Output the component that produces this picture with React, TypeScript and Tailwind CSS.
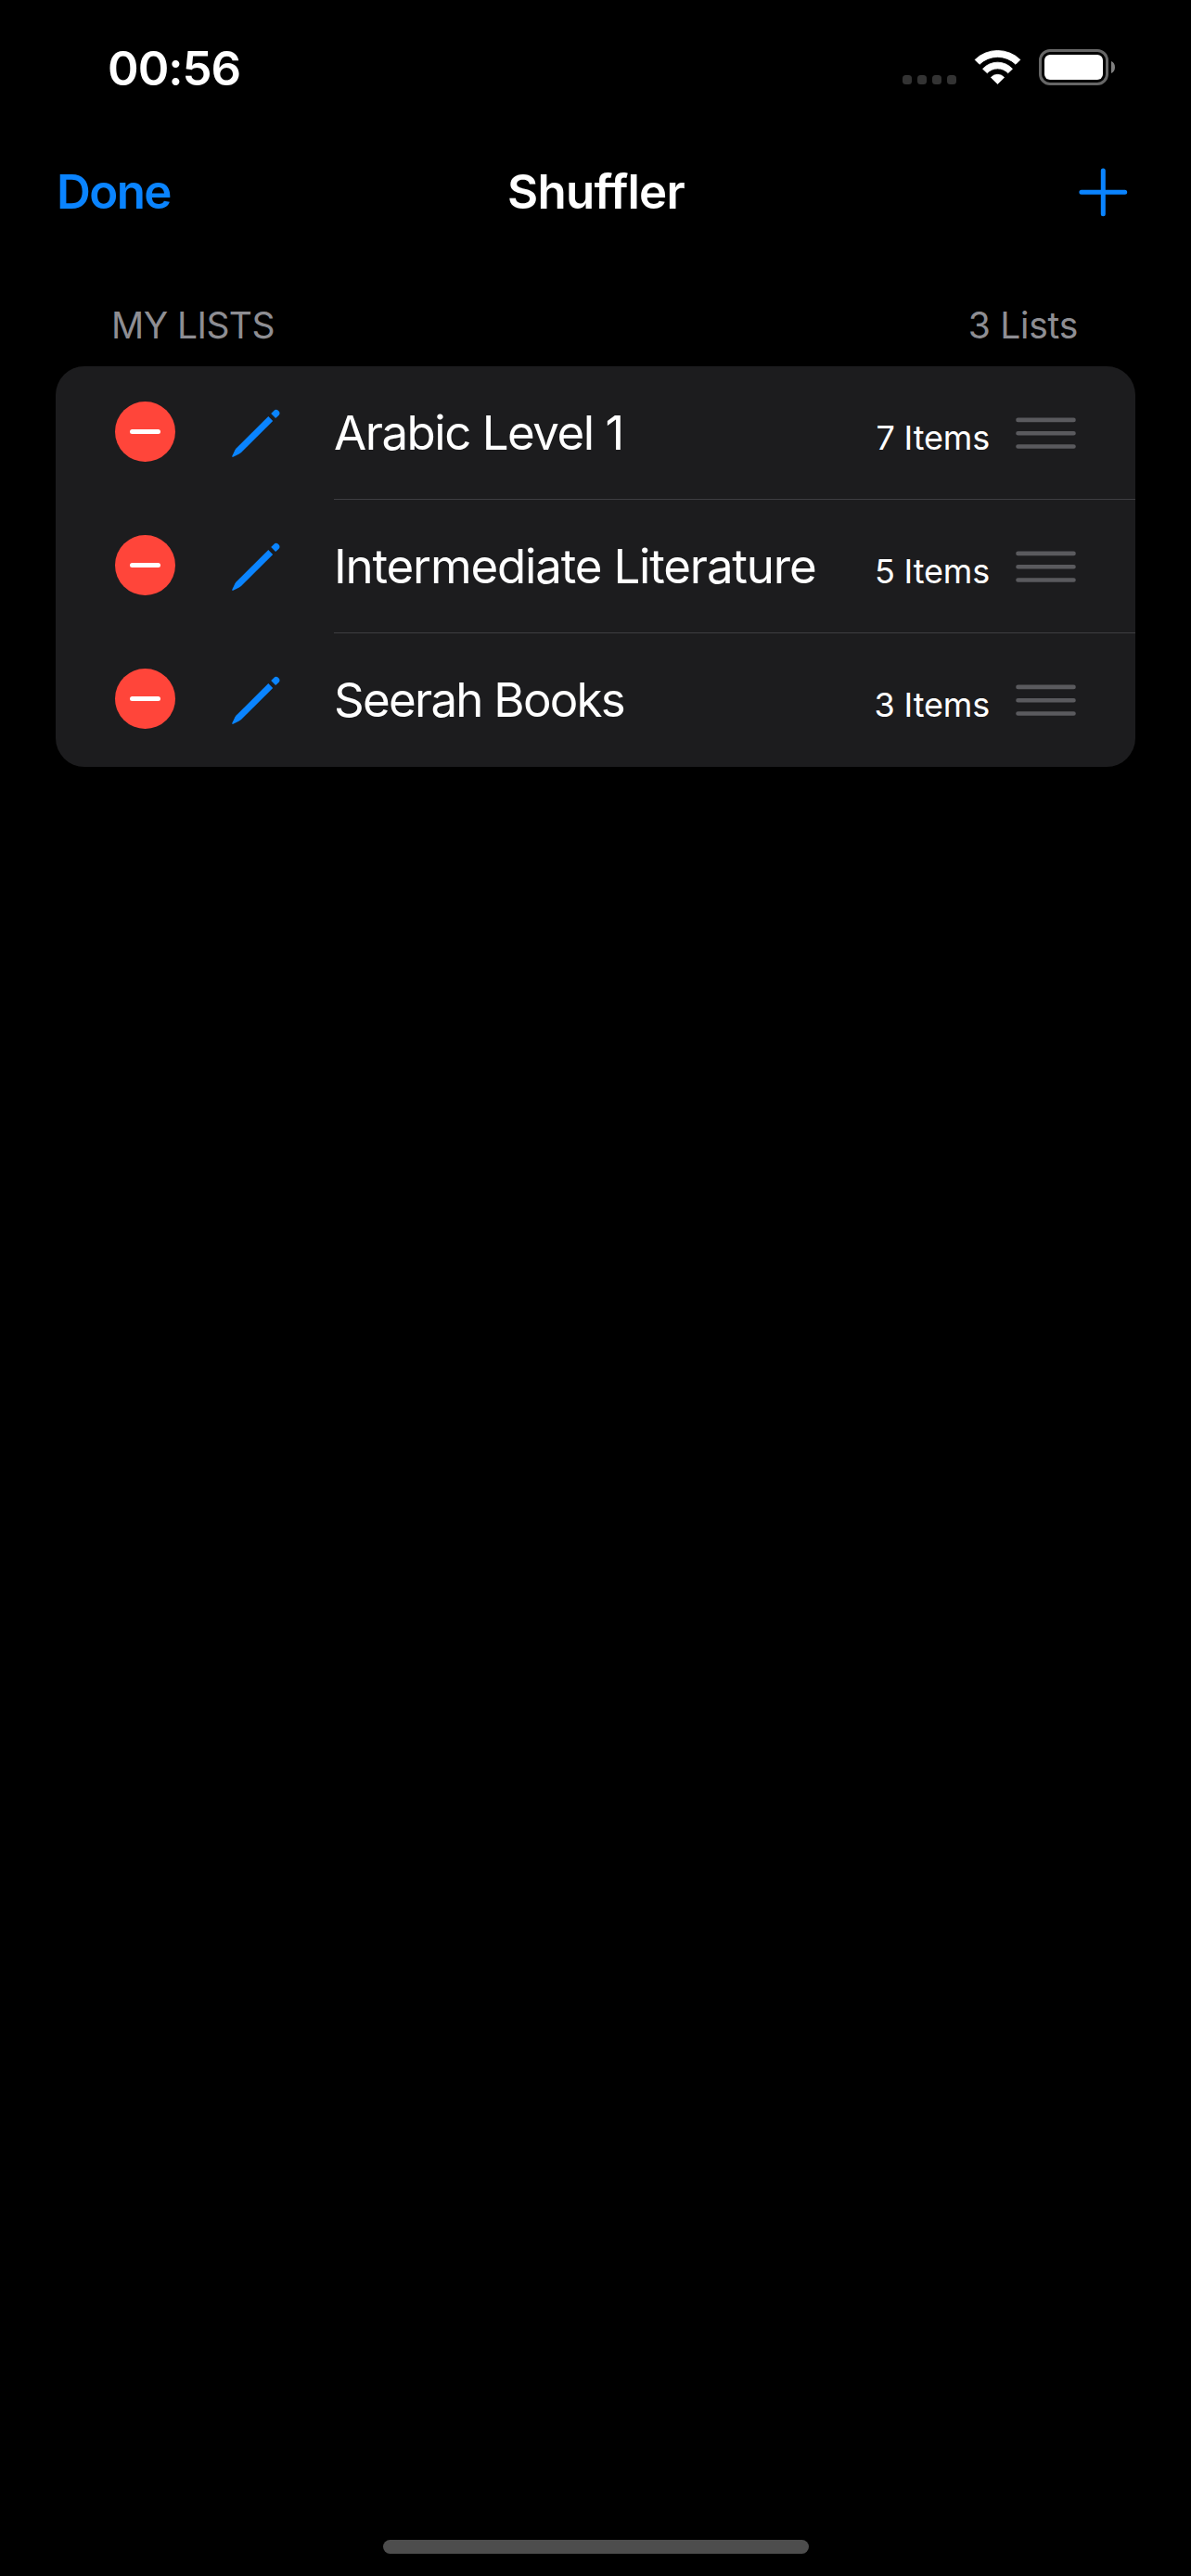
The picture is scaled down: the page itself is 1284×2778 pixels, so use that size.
type ListEntry = { title: string; count: string; tracking: string };

const lists: ListEntry[] = [
  { title: 'Arabic Level 1', count: '7 Items', tracking: 'tracking-[-1.49px]' },
  { title: 'Intermediate Literature', count: '5 Items', tracking: 'tracking-[-1.17px]' },
  { title: 'Seerah Books', count: '3 Items', tracking: 'tracking-[-1.75px]' },
];

function WifiIcon() {
  return (
    <svg width="51" height="37" viewBox="0 0 51 37" fill="#fff" stroke="#fff" strokeWidth="0.8" strokeLinejoin="round">
      <path d="M1.1 10.4A35 35 0 0 1 49.9 10.4L45 15.3A28 28 0 0 0 6 15.3Z" />
      <path d="M9.5 20.3A21.5 21.5 0 0 1 41.5 20.3L36.7 24.8A15.3 15.3 0 0 0 14.3 24.8Z" />
      <path d="M18.4 29.4A9.8 9.8 0 0 1 32.6 29.4L25.5 36.5Z" />
    </svg>
  );
}

function BatteryIcon() {
  return (
    <svg width="83" height="39" viewBox="0 0 83 39">
      <rect x="1.5" y="1.5" width="72" height="36" rx="10.5" fill="none" stroke="#666" strokeWidth="3" />
      <rect x="6" y="6" width="63" height="27" rx="6" fill="#fff" />
      <path d="M78 13C80.6 14 82 16.5 82 19.5C82 22.5 80.6 25 78 26Z" fill="#808080" />
    </svg>
  );
}

function StatusBar() {
  return (
    <div className="flex h-36 items-center justify-between pl-[116px] pr-[81px] pt-px">
      <span className="pt-px text-[51px] font-semibold leading-none tracking-[-1.01px]">00:56</span>
      <div className="flex items-center">
        <div className="mt-[27px] flex gap-1.5">
          {[0, 1, 2, 3].map((n) => (
            <span key={n} className="size-[10px] rounded-[3.5px] bg-[#333]" />
          ))}
        </div>
        <div className="mx-[19px]">
          <WifiIcon />
        </div>
        <BatteryIcon />
      </div>
    </div>
  );
}

function NavBar() {
  return (
    <div className="grid h-[126px] grid-cols-3 items-center pl-[61px] pr-[68px]">
      <button className="mb-0.5 justify-self-start text-[51px] font-semibold leading-none tracking-[-1.6px] text-[#0a84ff]">Done</button>
      <h1 className="mb-0.5 ml-2 justify-self-center whitespace-nowrap text-[51px] font-semibold leading-none tracking-[-0.77px]">Shuffler</h1>
      <button className="justify-self-end" aria-label="Add list">
        <svg width="53" height="53" viewBox="0 0 53 53" stroke="#0a84ff" strokeWidth="5" strokeLinecap="round">
          <path d="M26.3 2.9V49.7M2.9 26.3H49.7" />
        </svg>
      </button>
    </div>
  );
}

function PencilIcon() {
  return (
    <svg width="52" height="52" viewBox="0 0 52 52" fill="#0a84ff">
      <path d="M39.3 8L44.2 12.9L10 47.1Q9 48 7.8 48.6L1.3 51.7Q-0.2 52.2 0.3 50.7L3.4 44.3Q4 43.2 4.9 42.3Z" />
      <path d="M42.2 5.1L45 2.2Q47.5 -0.5 50.2 2Q52.9 4.700 50.2 7.2L47.1 10Z" />
    </svg>
  );
}

function ListRow({ entry, last }: { entry: ListEntry; last: boolean }) {
  return (
    <li className="flex h-36 items-center pl-[63.5px]">
      <button className="mb-[3px] flex size-[65px] items-center justify-center rounded-full bg-[#ff453a]" aria-label="Delete">
        <span className="h-[5px] w-[33px] rounded-full bg-white" />
      </button>
      <div className="ml-[61.5px] mr-[58px]">
        <PencilIcon />
      </div>
      <div className={`flex h-full flex-1 items-center justify-between border-b pr-16 ${last ? 'border-transparent' : 'border-[#3d3d41]'}`}>
        <span className={`whitespace-nowrap text-[51px] leading-none ${entry.tracking}`}>{entry.title}</span>
        <div className="flex items-center">
          <span className="mt-[10px] whitespace-nowrap text-[36px] leading-none tracking-[-0.15px]">{entry.count}</span>
          <svg className="ml-[28px]" width="65" height="34" viewBox="0 0 65 34" stroke="#5a5a5e" strokeWidth="4.6" strokeLinecap="round">
            <path d="M2.5 2.9H62.5M2.5 17.2H62.5M2.5 31.5H62.5" />
          </svg>
        </div>
      </div>
    </li>
  );
}

export default function App() {
  return (
    <div className="flex h-[2778px] w-[1284px] flex-col bg-black font-['Inter',sans-serif] text-white">
      <StatusBar />
      <NavBar />
      <main className="flex-1 px-[60px]">
        <div className="flex h-[125px] items-center justify-between pl-[60px] pr-[62px] pt-[35px] text-[39px] leading-none text-[#8e8e93]">
          <h2 className="tracking-[-0.56px]">MY LISTS</h2>
          <span className="tracking-[-0.25px]">3 Lists</span>
        </div>
        <ul className="overflow-hidden rounded-[31px] bg-[#1c1c1e]">
          {lists.map((entry, i) => (
            <ListRow key={entry.title} entry={entry} last={i === lists.length - 1} />
          ))}
        </ul>
      </main>
      <div className="mb-6 ml-px h-[15px] w-[459px] self-center rounded-full bg-[#4d4d4d]" />
    </div>
  );
}
